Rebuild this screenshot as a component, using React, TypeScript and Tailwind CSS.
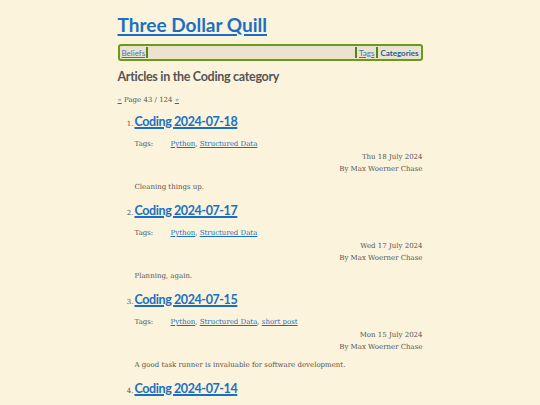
const ARTICLES = [
  {
    title: "Coding 2024-07-18",
    tags: ["Python", "Structured Data"],
    date: "Thu 18 July 2024",
    summary: "Cleaning things up.",
  },
  {
    title: "Coding 2024-07-17",
    tags: ["Python", "Structured Data"],
    date: "Wed 17 July 2024",
    summary: "Planning, again.",
  },
  {
    title: "Coding 2024-07-15",
    tags: ["Python", "Structured Data", "short post"],
    date: "Mon 15 July 2024",
    summary: "A good task runner is invaluable for software development.",
  },
  {
    title: "Coding 2024-07-14",
    tags: ["Python", "Structured Data"],
    date: "Sun 14 July 2024",
    summary: "More cleanup.",
  },
];

const HEAD = "font-['Lato','Open_Sans',sans-serif]";
const BODY = "font-['DejaVu_Serif','Liberation_Serif',serif]";

export default function App() {
  return (
    <div className={`h-[405px] overflow-hidden bg-[#fcf3dc] ${BODY} text-[#555]`}>
      <div className="mx-auto w-[305px] pt-[14px]">
        {/* Site title */}
        <h1 className={`${HEAD} text-[19px] leading-[22px] font-bold`}>
          <a href="#" className="text-[#1b6fc2] underline decoration-[1.5px] underline-offset-2">
            Three Dollar Quill
          </a>
        </h1>

        {/* Nav bar */}
        <nav className={`mt-[8px] h-[17px] flex items-center rounded-[3px] border-2 border-[#6a9a1c] bg-[#ebe3cd] px-[2px] ${HEAD} text-[8px]`}>
          <a href="#" className="text-[#3a78b8] underline">Beliefs</a>
          <span className="ml-[1px] h-[11px] w-[2px] bg-[#4f8a10]" />
          <div className="flex-1" />
          <span className="mr-[2px] h-[11px] w-[2px] bg-[#4f8a10]" />
          <a href="#" className="text-[#3a78b8] underline">Tags</a>
          <span className="mx-[2px] h-[11px] w-[2px] bg-[#4f8a10]" />
          <a href="#" className="font-bold text-[#2a5c96]">Categories</a>
        </nav>

        <h2 className={`${HEAD} mt-[8px] text-[12.5px] leading-[16px] font-bold tracking-[-0.3px] text-[#555]`}>
          Articles in the Coding category
        </h2>

        <p className="mt-[10px] text-[7px] leading-[10px]">
          <a href="#" className="text-[#1b6fc2] underline">«</a> Page 43 / 124{" "}
          <a href="#" className="text-[#1b6fc2] underline">»</a>
        </p>

        <ol className="mt-[9px] pl-[17px]">
          {ARTICLES.map((a, i) => (
            <li key={a.title} className="mb-[10px]">
              <div className="flex items-baseline">
                <span className="w-[8px] -ml-[8px] text-[7px] text-right pr-[1px]">{i + 1}.</span>
                <a href="#" className={`${HEAD} text-[12.5px] leading-[16px] font-bold tracking-[-0.4px] text-[#1b6fc2] underline decoration-[1.5px]`}>
                  {a.title}
                </a>
              </div>
              <div className="mt-[9px] flex text-[7px] leading-[11px]">
                <span className="w-[36px]">Tags:</span>
                <span>
                  {a.tags.map((t, j) => (
                    <span key={t}>
                      <a href="#" className="text-[#1b6fc2] underline">{t}</a>
                      {j < a.tags.length - 1 ? ", " : ""}
                    </span>
                  ))}
                </span>
              </div>
              <div className="mt-[1px] text-right text-[7px] leading-[12px]">
                <div>{a.date}</div>
                <div>By Max Woerner Chase</div>
              </div>
              <p className="mt-[7px] text-[7px] leading-[11px]">{a.summary}</p>
            </li>
          ))}
        </ol>
      </div>
    </div>
  );
}
